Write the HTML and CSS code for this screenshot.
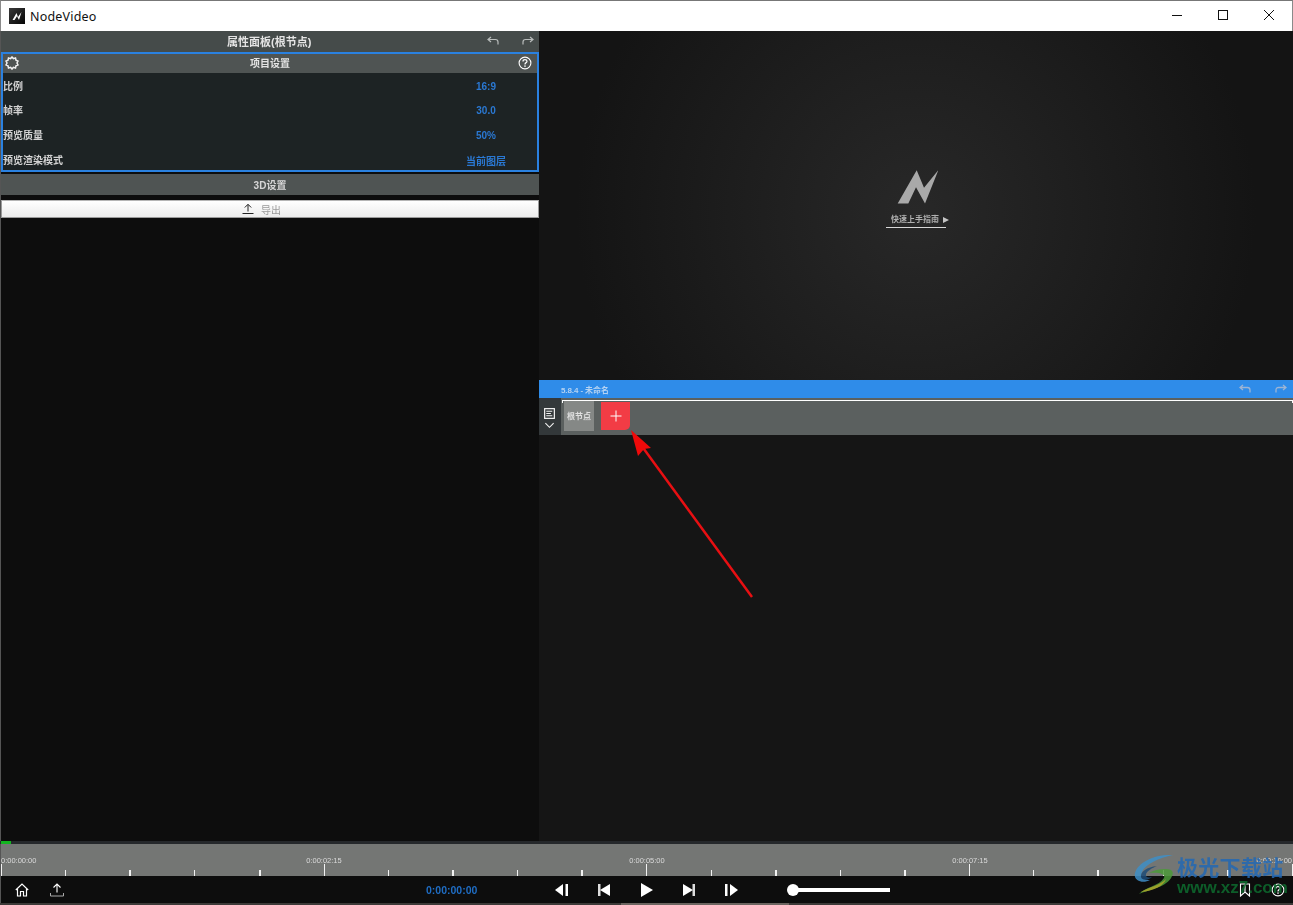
FILE: index.html
```html
<!DOCTYPE html>
<html lang="zh">
<head>
<meta charset="utf-8">
<title>NodeVideo</title>
<link rel="stylesheet" href="styles.css">
</head>
<body>
<div class="window">
  <header class="titlebar">
    <svg class="app-logo" viewBox="0 0 16 16"><defs><linearGradient id="lg" x1="0" y1="0" x2="1" y2="1"><stop offset="0" stop-color="#3a3a3a"/><stop offset="1" stop-color="#050505"/></linearGradient></defs><rect width="16" height="16" fill="url(#lg)"/><path d="M3.5 12 7.5 5 9 9 12.5 4 10 12 8 8.2 5.5 12Z" fill="#fff"/></svg>
    <span class="app-name">NodeVideo</span>
    <div class="win-controls">
      <svg viewBox="0 0 46 30"><path d="M18 14.5H28" stroke="#111" fill="none"/></svg>
      <svg viewBox="0 0 46 30"><rect x="18.5" y="9.5" width="9" height="9" stroke="#111" fill="none"/></svg>
      <svg viewBox="0 0 46 30"><path d="M18 9 28 19M28 9 18 19" stroke="#111" fill="none"/></svg>
    </div>
  </header>

  <main class="workspace">
    <aside class="props">
      <div class="props-head">
        <span class="props-title soft">属性面板(根节点)</span>
        <svg class="hist undo" viewBox="0 0 12 10"><path d="M4 1 1 3.5 4 6M1 3.5H8.5Q11 3.500 11 6V8.500" fill="none" stroke="#b9bdbc" stroke-width="1.200"/></svg>
        <svg class="hist redo" viewBox="0 0 12 10"><path d="M8 1 11 3.500 8 6M11 3.500H3.500Q1 3.500 1 6V8.500" fill="none" stroke="#b9bdbc" stroke-width="1.200"/></svg>
      </div>

      <section class="project">
        <div class="project-head">
          <svg class="gear" viewBox="0 0 14 14"><path d="M7 1 8.400 2.600 10.500 2 11 4.100 13 5 12 7 13 9 11 9.900 10.500 12 8.400 11.400 7 13 5.600 11.400 3.500 12 3 9.900 1 9 2 7 1 5 3 4.100 3.500 2 5.600 2.600Z" fill="none" stroke="#f2f2f2" stroke-width="1.500"/></svg>
          <span class="project-title soft">项目设置</span>
          <svg class="help" viewBox="0 0 14 14"><circle cx="7" cy="7" r="5.900" fill="none" stroke="#fff" stroke-width="1.100"/><path d="M5 5.400Q5 3.600 7 3.600 9 3.600 9 5.300 9 6.300 7.800 6.900 7 7.300 7 8.500" fill="none" stroke="#fff" stroke-width="1.200"/><rect x="6.300" y="9.400" width="1.400" height="1.400" fill="#fff"/></svg>
        </div>
        <div class="rows">
          <div class="row"><span class="row-label soft">比例</span><span class="row-value soft">16:9</span></div>
          <div class="row"><span class="row-label soft">帧率</span><span class="row-value soft">30.0</span></div>
          <div class="row"><span class="row-label soft">预览质量</span><span class="row-value soft">50%</span></div>
          <div class="row"><span class="row-label soft">预览渲染模式</span><span class="row-value soft">当前图层</span></div>
        </div>
      </section>

      <div class="settings3d soft">3D设置</div>

      <button class="export">
        <svg viewBox="0 0 12 12"><path d="M6 8.500V1.500M2.800 4.500 6 1.300 9.200 4.500M.5 10.500H11.500" fill="none" stroke="#222" stroke-width="1"/></svg>
        <span class="soft">导出</span>
      </button>
    </aside>

    <div class="stage">
      <section class="preview">
        <svg class="guide-logo" viewBox="0 0 41 34"><path d="M.7 33.500 19.700.200 27 17.800 41.300.200 28 33.500 19 17.200 11.300 33.500Z" fill="#a9a9a9"/></svg>
        <div class="guide-link">
          <span class="guide-text soft">快速上手指南</span>
          <svg class="guide-tri" viewBox="0 0 6 6"><path d="M0 0 6 3 0 6Z" fill="#c4c4c4"/></svg>
        </div>
      </section>

      <section class="editor">
        <div class="editor-bar">
          <span class="editor-title soft">5.8.4 - 未命名</span>
          <svg class="hist-small first" viewBox="0 0 12 10"><path d="M4 1 1 3.500 4 6M1 3.500H8.500Q11 3.500 11 6V8.500" fill="none" stroke="#9db4d4" stroke-width="1.300"/></svg>
          <svg class="hist-small" viewBox="0 0 12 10"><path d="M8 1 11 3.500 8 6M11 3.500H3.500Q1 3.500 1 6V8.500" fill="none" stroke="#9db4d4" stroke-width="1.300"/></svg>
        </div>
        <div class="node-track">
          <div class="track-side">
            <svg viewBox="0 0 12 12"><rect x=".7" y=".7" width="10.600" height="10.600" fill="none" stroke="#f4f4f4" stroke-width="1.300"/><path d="M2.500 3.500H9M2.500 6H7.500M2.500 8.500H9" stroke="#f4f4f4" stroke-width="1.200"/></svg>
            <svg viewBox="0 0 12 7"><path d="M1.500 1 6 5.500 10.500 1" fill="none" stroke="#f4f4f4" stroke-width="1.200"/></svg>
          </div>
          <div class="track-main">
            <div class="track-line"></div>
            <div class="nodes">
              <div class="node-root soft">根节点</div>
              <button class="node-add"><svg viewBox="0 0 12 12"><path d="M6 .5V11.500M.5 6H11.500" stroke="#fff" stroke-width="1"/></svg></button>
            </div>
          </div>
        </div>
      </section>
    </div>
  </main>

  <section class="timeline">
    <div class="progress"><div class="progress-fill"></div></div>
    <div class="ruler">
      <div class="ruler-labels">
        <span class="soft">0:00:00:00</span><span class="soft">0:00:02:15</span><span class="soft">0:00:05:00</span><span class="soft">0:00:07:15</span><span class="soft">0:00:10:00</span>
      </div>
      <div class="ticks">
        <i class="major"></i><i></i><i class="thick"></i><i></i><i class="thick"></i><i class="major"></i><i></i><i class="thick"></i><i></i><i class="thick"></i><i class="major"></i><i></i><i class="thick"></i><i></i><i class="thick"></i><i class="major"></i><i></i><i class="thick"></i><i></i><i class="thick"></i><i class="major"></i>
      </div>
    </div>
  </section>

  <footer class="controls">
    <svg class="ctl home" viewBox="0 0 14 14"><path d="M.8 7 7 1 13.200 7M2.500 6V13H5.500V8.500H8.500V13H11.500V6" fill="none" stroke="#fff" stroke-width="1.200"/></svg>
    <svg class="ctl upload" viewBox="0 0 14 14"><path d="M7 9.500V1M3.500 4.500 7 1 10.500 4.500" fill="none" stroke="#fff" stroke-width="1.100"/><path d="M.5 10V13H13.500V10" fill="none" stroke="#aaa" stroke-width="1"/></svg>
    <span class="clock soft">0:00:00:00</span>
    <div class="transport">
      <svg viewBox="0 0 16 14"><path d="M1 7 9 1V13Z" fill="#fff"/><rect x="11.500" y="1" width="2.500" height="12" fill="#fff"/></svg>
      <svg viewBox="0 0 16 14"><rect x="2" y="1" width="2.500" height="12" fill="#ddd"/><path d="M4 7 14 1V13Z" fill="#fff"/></svg>
      <svg viewBox="0 0 16 16"><path d="M2 1 14 8 2 15Z" fill="#fff"/></svg>
      <svg viewBox="0 0 16 14"><path d="M12 7 2 1V13Z" fill="#fff"/><rect x="11.500" y="1" width="2.500" height="12" fill="#ddd"/></svg>
      <svg viewBox="0 0 16 14"><rect x="2" y="1" width="2.500" height="12" fill="#fff"/><path d="M15 7 7 1V13Z" fill="#fff"/></svg>
    </div>
    <div class="zoom-slider"><div class="zoom-knob"></div></div>
    <svg class="ctl bookmark" viewBox="0 0 12 14"><path d="M1.500 1H10.500V13L6 9 1.500 13ZM6 1V9" fill="none" stroke="#fff" stroke-width="1.100"/></svg>
    <svg class="ctl help-bottom" viewBox="0 0 14 14"><circle cx="7" cy="7" r="5.900" fill="none" stroke="#fff" stroke-width="1.100"/><path d="M5 5.400Q5 3.600 7 3.600 9 3.600 9 5.300 9 6.300 7.800 6.900 7 7.300 7 8.500" fill="none" stroke="#fff" stroke-width="1.200"/><rect x="6.300" y="9.400" width="1.400" height="1.400" fill="#fff"/></svg>
  </footer>
  <div class="bottom-edge"></div>
</div>

<svg class="arrow" viewBox="0 0 140 180"><path d="M128 168 17 16" stroke="#e80f12" stroke-width="2.500" fill="none"/><path d="M7 1 27 19 20 20 14 27Z" fill="#f00a0a"/></svg>

<div class="watermark">
  <svg class="wm-logo" viewBox="0 0 44 42">
    <path d="M40 2C22 1 5 9 2 20 0 28 10 31 17 27 11 27 7 24 9 19 12 11 26 5 40 2Z" fill="#3f8fc7"/>
    <path d="M24 13C14 14 7 19 8 24 9 28 16 27 19 24 15 25 12 24 13 21 14 18 19 15 24 13Z" fill="#1e4c78"/>
    <path d="M16 20C22 16 33 15 38 17 43 20 37 30 26 34 18 37 10 39 6 41 12 34 26 33 31 25 33 21 26 19 16 20Z" fill="#4d9a3a"/>
    <path d="M8 39C16 34 28 32 33 26 31 33 20 38 8 39Z" fill="#b7b92e"/>
  </svg>
  <div class="wm-text">
    <span class="wm-cn">极光下载站</span>
    <span class="wm-url">www.xz7.com</span>
  </div>
</div>
</body>
</html>
```

FILE: styles.css
```css
* { box-sizing: border-box; }
html, body { margin: 0; height: 100%; overflow: hidden; background: #0d0d0d; }
body { font-family: "Liberation Sans", "Noto Sans CJK SC", sans-serif; position: relative; }
.soft { filter: blur(.45px); }

.window { width: 1293px; height: 905px; display: flex; flex-direction: column; }

.titlebar { height: 31px; flex: none; background: #fff; display: flex; align-items: center; border-top: 1px solid #777; border-left: 1px solid #8a8a8a; border-right: 1px solid #8a8a8a; padding-left: 8px; }
.app-logo { width: 16px; height: 16px; flex: none; }
.app-name { font: 12.5px "Noto Sans", "Open Sans", sans-serif; margin-left: 5px; color: #111; letter-spacing: .2px; }
.win-controls { margin-left: auto; display: flex; }
.win-controls svg { width: 46px; height: 30px; display: block; }

.workspace { height: 810px; flex: none; display: flex; border-left: 1px solid #555; }

.props { width: 538px; flex: none; background: #0d0d0d; display: flex; flex-direction: column; font-weight: 700; }
.props-head { height: 21px; flex: none; background: #454b4a; display: flex; align-items: center; padding: 0 0 1px 226px; }
.props-title { font-size: 11px; color: #e4e4e4; }
.hist { width: 12px; height: 10px; }
.undo { margin-left: 176px; }
.redo { margin-left: 23px; }

.project { height: 120px; flex: none; border: 2px solid #2a81e0; background: #1d2324; display: flex; flex-direction: column; }
.project-head { height: 19px; flex: none; background: #4f5453; display: flex; align-items: center; padding: 0 5px 2px 2px; }
.gear { width: 14px; height: 14px; }
.project-title { font-size: 10px; color: #e4e4e4; margin-left: 231px; }
.help { width: 14px; height: 14px; margin-left: auto; }
.rows { flex: none; height: 97px; padding-top: 1px; }
.row { height: 24.6px; display: flex; align-items: center; font-size: 10px; }
.row-label { color: #d2d2d2; width: 483px; padding-bottom: 2px; }
.row-value { color: #2a78d2; width: 0; white-space: nowrap; display: flex; justify-content: center; }

.settings3d { margin-top: 2px; height: 21px; flex: none; background: #4f5453; color: #d6d6d6; font-size: 10px; font-weight: 700; display: flex; align-items: center; justify-content: center; }

.export { margin: 5px 0 0; height: 18px; width: 538px; flex: none; border: 1px solid #9b9b9b; border-top-color: #b5b5b5; background: linear-gradient(#ffffff, #ececec); display: flex; align-items: center; justify-content: center; gap: 7px; padding: 0 17px 0 0; font: 400 10px "Liberation Sans", "Noto Sans CJK SC", sans-serif; color: #9a9a9a; }
.export svg { width: 12px; height: 12px; }

.stage { width: 754px; flex: none; display: flex; flex-direction: column; }

.preview { height: 349px; flex: none; background: radial-gradient(circle 340px at 50% 52%, #282828 0%, #1e1e1e 50%, #141414 100%); display: flex; flex-direction: column; align-items: center; padding-top: 139px; }
.guide-logo { width: 41px; height: 34px; margin-left: 3px; display: block; flex: none; }
.guide-link { margin-top: 10px; width: 60px; height: 14px; flex: none; border-bottom: 1px solid #d8d8d8; display: flex; align-items: flex-start; padding-left: 5px; gap: 4px; }
.guide-text { font-size: 8px; line-height: 12px; font-weight: 700; color: #b0b0b0; white-space: nowrap; flex: none; }
.guide-tri { width: 6px; height: 6px; margin-top: 3px; flex: none; }

.editor { flex: 1; background: #151515; display: flex; flex-direction: column; }
.editor-bar { height: 18px; flex: none; background: #2f8ce9; display: flex; align-items: center; padding: 0 6px 0 22px; }
.editor-title { font-size: 8px; font-weight: 700; color: #b4d2f2; white-space: nowrap; letter-spacing: -.1px; }
.hist-small { width: 12px; height: 10px; margin-left: 24px; flex: none; }
.hist-small.first { margin-left: auto; }

.node-track { height: 37px; flex: none; background: #5b605f; display: flex; }
.track-side { width: 22px; flex: none; background: #33383a; display: flex; flex-direction: column; align-items: center; padding: 10px 2px 0 0; gap: 3px; }
.track-side svg:first-child { width: 11px; height: 11px; flex: none; }
.track-side svg:last-child { width: 11px; height: 7px; flex: none; }
.track-main { flex: 1; padding-top: 2px; }
.track-line { height: 3px; border-top: 1px solid #fff; border-left: 1px solid #fff; border-right: 1px solid #fff; margin-left: 1px; }
.nodes { display: flex; align-items: flex-start; gap: 7px; padding-left: 3px; margin-top: -2px; }
.node-root { width: 30px; height: 30px; background: #858886; color: #e0e0e0; font-size: 8px; font-weight: 700; display: flex; align-items: center; justify-content: center; padding-bottom: 1px; }
.node-add { width: 29px; height: 28px; margin-top: 1px; background: #f23c45; border: 0; border-bottom-right-radius: 5px; padding: 0; display: flex; align-items: center; justify-content: center; }
.node-add svg { width: 12px; height: 12px; }

.timeline { height: 35px; flex: none; display: flex; flex-direction: column; }
.progress { height: 3px; flex: none; background: #25282b; }
.progress-fill { width: 10px; height: 3px; margin-left: 1px; background: #12b520; }
.ruler { flex: 1; background: #747674; display: flex; flex-direction: column; justify-content: flex-end; border-left: 1px solid #555; }
.ruler-labels { display: grid; grid-template-columns: 161.500px repeat(3, 323px) 1fr; font-size: 7.500px; color: #dadada; flex: none; margin-bottom: -3px; }
.ruler-labels span { text-align: center; line-height: 12px; }
.ruler-labels span:first-child { text-align: left; }
.ruler-labels span:last-child { text-align: right; padding-right: 1px; }
.ticks { height: 12px; flex: none; display: flex; justify-content: space-between; align-items: flex-end; }
.ticks i { display: block; width: 1px; height: 6px; background: #f2f2f2; }
.ticks i.thick { width: 2px; }
.ticks i.major { height: 12px; }

.controls { height: 27px; flex: none; background: #0d0d0d; display: flex; align-items: center; border-left: 1px solid #555; }
.ctl { flex: none; }
.home { width: 14px; height: 14px; margin-left: 14px; }
.upload { width: 14px; height: 14px; margin-left: 21px; }
.clock { font-size: 10.500px; font-weight: 700; color: #1f6dc4; margin-left: 362px; width: 52px; }
.transport { margin-left: 76px; display: flex; align-items: center; gap: 26.250px; }
.transport svg { width: 16px; height: 14px; display: block; }
.transport svg:nth-child(3) { height: 16px; }
.zoom-slider { margin-left: 54px; width: 97px; height: 4px; background: #fff; position: relative; }
.zoom-knob { position: absolute; left: -6px; top: -4px; width: 12px; height: 12px; border-radius: 50%; background: #fff; }
.bookmark { width: 12px; height: 14px; margin-left: 349px; }
.help-bottom { width: 14px; height: 14px; margin-left: 20px; }

.bottom-edge { height: 2px; flex: none; background: linear-gradient(90deg, #3c3a38 0 48%, #6b6560 48% 61%, #3c3a38 61% 100%); }

.arrow { position: absolute; left: 624px; top: 429px; width: 140px; height: 180px; }

.watermark { position: absolute; left: 1133px; top: 853px; display: flex; gap: 0; pointer-events: none; opacity: .85; }
.wm-logo { width: 44px; height: 42px; flex: none; }
.wm-text { display: flex; flex-direction: column; }
.wm-cn { font-size: 21px; line-height: 26px; font-weight: 700; color: #2268b4; letter-spacing: .3px; white-space: nowrap; font-family: "Noto Sans CJK SC", sans-serif; }
.wm-url { font-size: 17px; line-height: 18px; font-weight: 700; color: #0d6b2e; white-space: nowrap; font-family: "Liberation Sans", sans-serif; }
```
